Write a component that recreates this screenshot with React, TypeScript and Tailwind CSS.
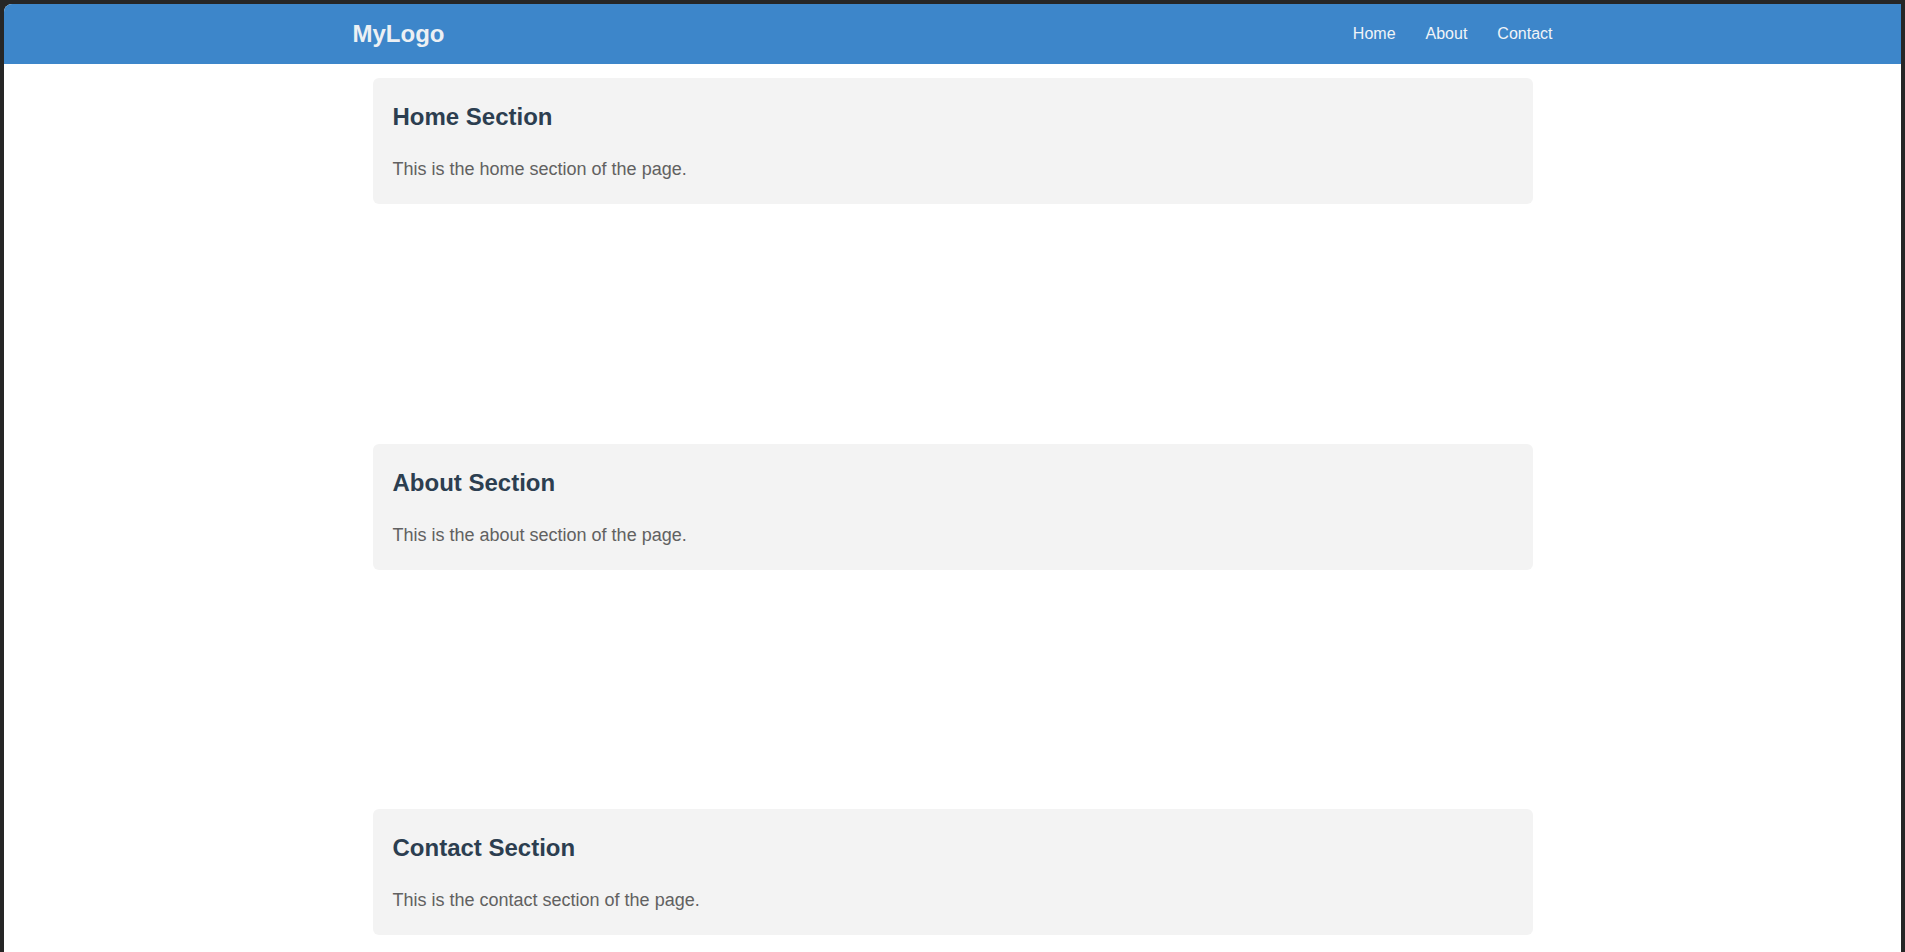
const sections = [
  { id: "home", title: "Home Section", text: "This is the home section of the page." },
  { id: "about", title: "About Section", text: "This is the about section of the page." },
  { id: "contact", title: "Contact Section", text: "This is the contact section of the page." },
];

const links = ["Home", "About", "Contact"];

const Header = () => (
  <header className="h-[60px] bg-[#3d86ca] shrink-0">
    <div className="w-[1200px] h-full mx-auto flex items-center justify-between">
      <a href="#home" className="text-[24px] leading-[28px] font-bold text-[#ecf0f4]">
        MyLogo
      </a>
      <nav className="flex items-center gap-[30px]">
        {links.map((link) => (
          <a
            key={link}
            href={`#${link.toLowerCase()}`}
            className="text-[16px] leading-[24px] text-[#f0f4f8]"
          >
            {link}
          </a>
        ))}
      </nav>
    </div>
  </header>
);

const Section = ({ id, title, text }: { id: string; title: string; text: string }) => (
  <section id={id} className="h-[126px] bg-[#f3f3f3] rounded-[6px] px-5 pt-[25px]">
    <h2 className="text-[24px] leading-[28px] font-bold text-[#2c3e50]">{title}</h2>
    <p className="mt-[28px] text-[18px] leading-[21px] text-[#616161]">{text}</p>
  </section>
);

export default function App() {
  return (
    <div
      className="h-screen bg-[#262626] pt-1 px-1 overflow-hidden"
      style={{ fontFamily: '"Liberation Sans", Arial, sans-serif' }}
    >
      <div className="h-full bg-white rounded-tl-lg overflow-hidden flex flex-col">
        <Header />
        <main className="w-[1160px] mx-auto pt-[14px] flex flex-col gap-[239.5px]">
          {sections.map((s) => (
            <Section key={s.id} {...s} />
          ))}
        </main>
      </div>
    </div>
  );
}
